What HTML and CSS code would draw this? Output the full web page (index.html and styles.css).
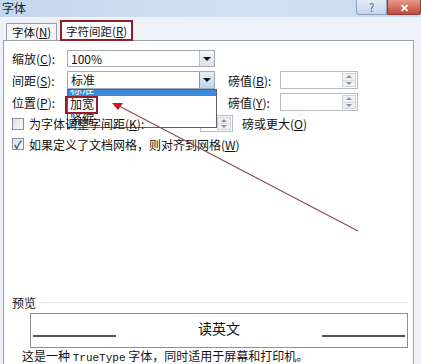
FILE: index.html
```html
<!DOCTYPE html>
<html lang="zh-CN">
<head>
<meta charset="utf-8">
<title>字体</title>
<link rel="stylesheet" href="styles.css">
</head>
<body>
<div class="window">
  <div class="titlebar">
    <span class="title">字体</span>
    <div class="tbtns">
      <span class="tbtn help">?</span>
      <span class="tbtn close">✕</span>
    </div>
  </div>
  <div class="tabs">
    <span class="tab">字体(<u>N</u>)</span>
    <span class="tab active">字符间距(<u>R</u>)</span>
  </div>
  <div class="panel">
    <div class="row r1">
      <span class="lbl">缩放(<u>C</u>):</span>
      <div class="combo"><span class="val">100%</span><span class="drop"><i></i></span></div>
    </div>
    <div class="row r2">
      <span class="lbl">间距(<u>S</u>):</span>
      <div class="combo"><span class="val">标准</span><span class="drop hot"><i></i></span></div>
      <span class="lbl2">磅值(<u>B</u>):</span>
      <div class="spin"><span class="sp"><b class="up"></b><b class="dn"></b></span></div>
    </div>
    <div class="row r3">
      <span class="lbl">位置(<u>P</u>):</span>
      <div class="combo blank"></div>
      <span class="lbl2">磅值(<u>Y</u>):</span>
      <div class="spin"><span class="sp"><b class="up"></b><b class="dn"></b></span></div>
    </div>
    <div class="row r4">
      <span class="cb"></span>
      <span class="cbt">为字体调整字间距(<u>K</u>):</span>
      <div class="spin small"><span class="sp"><b class="up"></b><b class="dn"></b></span></div>
      <span class="after">磅或更大(<u>O</u>)</span>
    </div>
    <div class="row r5">
      <span class="cb checked">✓</span>
      <span class="cbt">如果定义了文档网格，则对齐到网格(<u>W</u>)</span>
    </div>

    <div class="preview">
      <div class="plabel"><span>预览</span><span class="pline"></span></div>
      <div class="pbox">
        <span class="ul"></span>
        <span class="ptext">读英文</span>
        <span class="ul"></span>
      </div>
      <div class="pnote">这是一种 <span class="mono">TrueType</span> 字体，同时适用于屏幕和打印机。</div>
    </div>

    <div class="dropdown">
      <div class="items">
        <div class="item sel">标准</div>
        <div class="item">加宽</div>
        <div class="item">紧缩</div>
      </div>
    </div>
    <span class="redbox"></span>
    <svg class="arrow" width="421" height="324" viewBox="0 0 421 324">
      <line x1="119" y1="66" x2="358" y2="191" stroke="#8a4c55" stroke-width="1.2"/>
      <polygon points="112,63 123,63 118,70" fill="#d0151d"/>
    </svg>
  </div>
</div>
</body>
</html>
```

FILE: styles.css
```css
* { box-sizing: border-box; }
html, body { margin: 0; padding: 0; }
body {
  width: 421px;
  height: 364px;
  overflow: hidden;
  background: #eef2f8;
  font-family: "Noto Sans CJK SC", "Noto Sans", sans-serif;
  font-size: 12px;
  color: #111;
}
u { text-decoration: underline; text-underline-offset: 1px; }
.window { width: 421px; height: 364px; display: flex; flex-direction: column; }

.titlebar {
  height: 17px;
  flex: none;
  display: flex;
  justify-content: space-between;
  align-items: flex-start;
  background: linear-gradient(to right, #c3d7ee, #d3e2f3 60%, #c7daef);
}
.title { padding-left: 2px; line-height: 15px; font-size: 12px; color: #1a1a1a; }
.tbtns { display: flex; }
.tbtn {
  height: 15px;
  display: flex; align-items: center; justify-content: center;
  font-size: 11px; line-height: 1;
  border: 1px solid #8aa0bc;
  border-top: none;
}
.help { width: 31px; background: linear-gradient(#e3ecf6, #c3d4e8); color: #4a5e78; border-radius: 0 0 0 3px; }
.close { width: 34px; background: linear-gradient(#e59a8c, #c8493a); color: #fff; border-color: #8e3b32; font-weight: bold; border-radius: 0 0 3px 0; }

.tabs {
  height: 21px;
  flex: none;
  margin-top: 2px;
  padding-left: 6px;
  display: flex;
  align-items: flex-end;
}
.tab {
  height: 17px;
  padding: 0 5px;
  line-height: 16px;
  border: 1px solid #9a9ea6;
  border-bottom: none;
  background: #f6f7f9;
  font-size: 11.5px;
}
.tab.active {
  height: 21px;
  margin-left: 3px;
  margin-bottom: -1px;
  padding: 0 4px;
  line-height: 18px;
  background: #fff;
  border: 2px solid #8f1d2c;
  position: relative;
  z-index: 2;
}

.panel {
  position: relative;
  flex: 1;
  margin-left: 3px;
  width: 411px;
  background: #fff;
  border: 1px solid #9a9ea6;
  border-bottom: none;
  padding: 9px 0 0 8px;
}

.row { display: flex; align-items: center; white-space: nowrap; }
.r1 { height: 17px; }
.r2 { height: 18px; margin-top: 4px; }
.r3 { height: 18px; margin-top: 4px; }
.r4 { height: 17px; margin-top: 4px; }
.r5 { height: 14px; margin-top: 5px; }

.lbl { width: 55px; }
.combo {
  width: 148px;
  height: 100%;
  border: 1px solid #a5abb5;
  display: flex;
  align-items: center;
  justify-content: space-between;
  padding-left: 3px;
}
.combo.blank { border-color: transparent; }
.val { line-height: 14px; }
.drop {
  width: 15px;
  height: 100%;
  border-left: 1px solid #b8bec8;
  background: linear-gradient(#f4f5f7, #dde1e6);
  display: flex; align-items: center; justify-content: center;
}
.drop.hot { background: linear-gradient(#e4f0fb, #b9d7f2); border-left-color: #6f9ccb; }
.drop i {
  width: 0; height: 0;
  border-left: 4px solid transparent;
  border-right: 4px solid transparent;
  border-top: 4px solid #111;
}
.lbl2 { margin-left: 13px; width: 52px; }
.spin {
  width: 78px;
  height: 100%;
  border: 1px solid #b5bac3;
  display: flex;
  justify-content: flex-end;
  padding: 1px;
}
.spin.small { width: 33px; margin-left: 0; }
.sp {
  width: 14px;
  height: 100%;
  display: flex;
  flex-direction: column;
  border: 1px solid #cfd3d9;
  background: #eef0f3;
}
.sp b { flex: 1; display: flex; align-items: center; justify-content: center; }
.sp b::after {
  content: "";
  width: 0; height: 0;
  border-left: 3px solid transparent;
  border-right: 3px solid transparent;
}
.sp .up::after { border-bottom: 3px solid #8c9099; }
.sp .dn::after { border-top: 3px solid #8c9099; }
.sp .up { border-bottom: 1px solid #d8dbe0; }

.cb {
  width: 12px; height: 12px;
  border: 1px solid #8c9099;
  background: linear-gradient(135deg, #dcdfe4, #fafafa);
  display: flex; align-items: center; justify-content: center;
  font-size: 11px; line-height: 1; color: #3b4a63; font-weight: bold;
}
.cbt { margin-left: 5px; position: relative; z-index: 3; }
.r4 .cbt { width: 171px; }
.after { margin-left: 9px; }

.preview {
  position: absolute;
  left: 0; right: 0;
  top: 255px;
  padding-left: 8px;
}
.plabel { display: flex; align-items: center; height: 13px; padding-right: 5px; }
.pline { flex: 1; height: 1px; background: #dfe2e6; margin-left: 5px; }
.pbox {
  margin: 4px 5px 0 18px;
  height: 35px;
  border: 1px solid #8d9097;
  display: flex;
  align-items: center;
  justify-content: space-between;
  padding: 0 2px;
}
.ptext { font-size: 14px; position: relative; top: -3px; }
.ul { width: 83px; height: 2px; background: #555; margin-top: 10px; }
.pnote { margin-top: 1px; padding-left: 10px; height: 14px; line-height: 14px; }
.mono { font-family: "Liberation Mono", monospace; font-size: 11px; }

.dropdown {
  position: absolute;
  left: 63px;
  top: 48px;
  width: 150px;
  height: 39px;
  border: 1px solid #5a5f68;
  background: #fff;
  overflow: hidden;
  z-index: 2;
}
.items { margin-top: -9px; }
.item { height: 15px; line-height: 15px; padding-left: 2px; }
.item.sel { background: #3a8bdc; color: #fff; }
.redbox {
  position: absolute;
  left: 61px;
  top: 55px;
  width: 33px;
  height: 18px;
  border: 2px solid #9a1b2b;
  z-index: 4;
}
.arrow { position: absolute; left: -4px; top: -1px; z-index: 5; pointer-events: none; }
```
